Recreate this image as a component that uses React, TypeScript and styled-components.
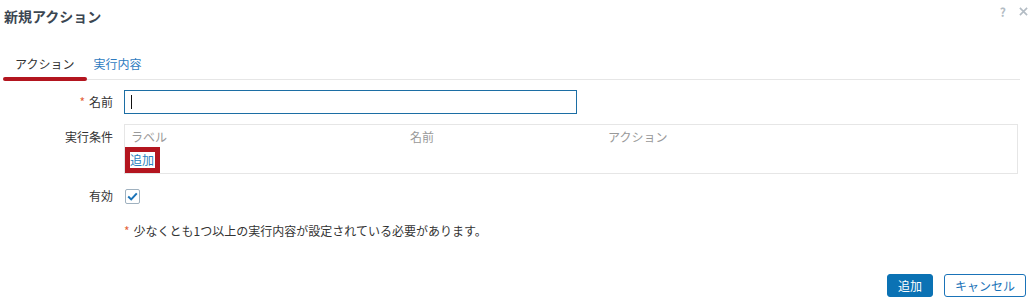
import styled, { createGlobalStyle } from "styled-components";

const GlobalStyle = createGlobalStyle`
  html, body {
    margin: 0;
    padding: 0;
    background: #fff;
  }
  body {
    font-family: "Noto Sans CJK JP", "Noto Sans", sans-serif;
    font-size: 12px;
    color: #333;
  }
`;

const Dialog = styled.div`
  width: 1036px;
  height: 299px;
  display: flex;
  flex-direction: column;
  box-sizing: border-box;
`;

const Header = styled.div`
  height: 32px;
  display: flex;
  align-items: center;
  justify-content: space-between;
  padding: 0 8px 0 4px;
`;

const Title = styled.div`
  font-size: 14px;
  font-weight: bold;
  color: #3b4651;
`;

const Tools = styled.div`
  display: flex;
  align-items: center;
  gap: 13px;
  margin-top: -10px;
  color: #b3bcc4;
  font-size: 12px;
  font-weight: bold;
`;

const Tabs = styled.div`
  margin: 16px 16px 0 3px;
  display: flex;
  border-bottom: 1px solid #e6e6e6;
`;

const Tab = styled.div<{ $active?: boolean; $pl: number; $pr: number }>`
  position: relative;
  height: 31px;
  display: flex;
  align-items: center;
  padding: 0 ${(p) => p.$pr}px 0 ${(p) => p.$pl}px;
  color: ${(p) => (p.$active ? "#333" : "#2e7bbf")};
  cursor: pointer;

  &::after {
    content: "";
    display: ${(p) => (p.$active ? "block" : "none")};
    position: absolute;
    left: 0;
    right: 0;
    bottom: -2px;
    height: 4px;
    border-radius: 2px;
    background: #b3151f;
  }
`;

const Form = styled.div`
  display: flex;
  flex-direction: column;
`;

const Row = styled.div<{ $top: number; $align?: string }>`
  display: grid;
  grid-template-columns: 113px 1fr;
  column-gap: 11px;
  align-items: ${(p) => p.$align || "center"};
  margin-top: ${(p) => p.$top}px;
  margin-right: 18px;
`;

const Label = styled.div<{ $pt?: number }>`
  text-align: right;
  line-height: 18px;
  padding-top: ${(p) => p.$pt || 0}px;
`;

const Required = styled.span`
  color: #e4633a;
  margin-right: 4px;
`;

const InputBox = styled.div`
  width: 453px;
  height: 24px;
  box-sizing: border-box;
  border: 1px solid #1c6ea4;
  display: flex;
  align-items: center;
  padding-left: 6px;
`;

const Caret = styled.span`
  width: 1px;
  height: 14px;
  background: #111;
`;

const Table = styled.div`
  border: 1px solid #e6e6e6;
  height: 50px;
  box-sizing: border-box;
`;

const HeadRow = styled.div`
  display: grid;
  grid-template-columns: 279px 198px 1fr;
  height: 21px;
  align-items: center;
  padding: 1px 0 0 6px;
  color: #999;
`;

const Highlight = styled.div`
  display: inline-block;
  border: 5px solid #b3151f;
  height: 16px;
`;

const Link = styled.a`
  display: block;
  width: 25px;
  line-height: 16px;
  color: #2a7fc0;
  text-decoration: none;
  cursor: pointer;
`;

const Checkbox = styled.div`
  width: 15px;
  height: 15px;
  margin-left: 1px;
  box-sizing: border-box;
  border: 1px solid #9fb1bf;
  border-radius: 2px;
  display: flex;
  align-items: center;
  justify-content: center;
`;

const Note = styled.div`
  margin: 17px 0 0 124px;
  line-height: 18px;
  color: #333;
`;

const Footer = styled.div`
  display: flex;
  justify-content: flex-end;
  gap: 11px;
  margin: 34px 10px 0 0;
`;

const Button = styled.button<{ $primary?: boolean }>`
  height: 23px;
  box-sizing: border-box;
  padding: 0 ${(p) => (p.$primary ? 10 : 10)}px;
  font-family: inherit;
  font-size: 12px;
  border-radius: 3px;
  border: 1px solid ${(p) => (p.$primary ? "#0b72b4" : "#1a73b8")};
  background: ${(p) => (p.$primary ? "#0b72b4" : "#fff")};
  color: ${(p) => (p.$primary ? "#fff" : "#1a73b8")};
  cursor: pointer;
`;

export default function App() {
  return (
    <Dialog>
      <GlobalStyle />
      <Header>
        <Title>新規アクション</Title>
        <Tools>
          <span>?</span>
          <svg width="9" height="9" viewBox="0 0 10 10">
            <path d="M1 1L9 9M9 1L1 9" stroke="#b3bcc4" strokeWidth="1.8" />
          </svg>
        </Tools>
      </Header>

      <Tabs>
        <Tab $active $pl={12} $pr={13}>
          アクション
        </Tab>
        <Tab $pl={6} $pr={6}>
          実行内容
        </Tab>
      </Tabs>

      <Form>
        <Row $top={10}>
          <Label>
            <Required>*</Required>名前
          </Label>
          <InputBox>
            <Caret />
          </InputBox>
        </Row>

        <Row $top={10} $align="start">
          <Label $pt={4}>実行条件</Label>
          <Table>
            <HeadRow>
              <span>ラベル</span>
              <span>名前</span>
              <span>アクション</span>
            </HeadRow>
            <Highlight>
              <Link>追加</Link>
            </Highlight>
          </Table>
        </Row>

        <Row $top={13}>
          <Label>有効</Label>
          <Checkbox>
            <svg width="11" height="9" viewBox="0 0 11 9">
              <path
                d="M1.2 4.6L4.2 7.4L9.8 1.4"
                fill="none"
                stroke="#1a73b8"
                strokeWidth="2"
              />
            </svg>
          </Checkbox>
        </Row>

        <Note>
          <Required>*</Required>
          少なくとも1つ以上の実行内容が設定されている必要があります。
        </Note>
      </Form>

      <Footer>
        <Button $primary>追加</Button>
        <Button>キャンセル</Button>
      </Footer>
    </Dialog>
  );
}
